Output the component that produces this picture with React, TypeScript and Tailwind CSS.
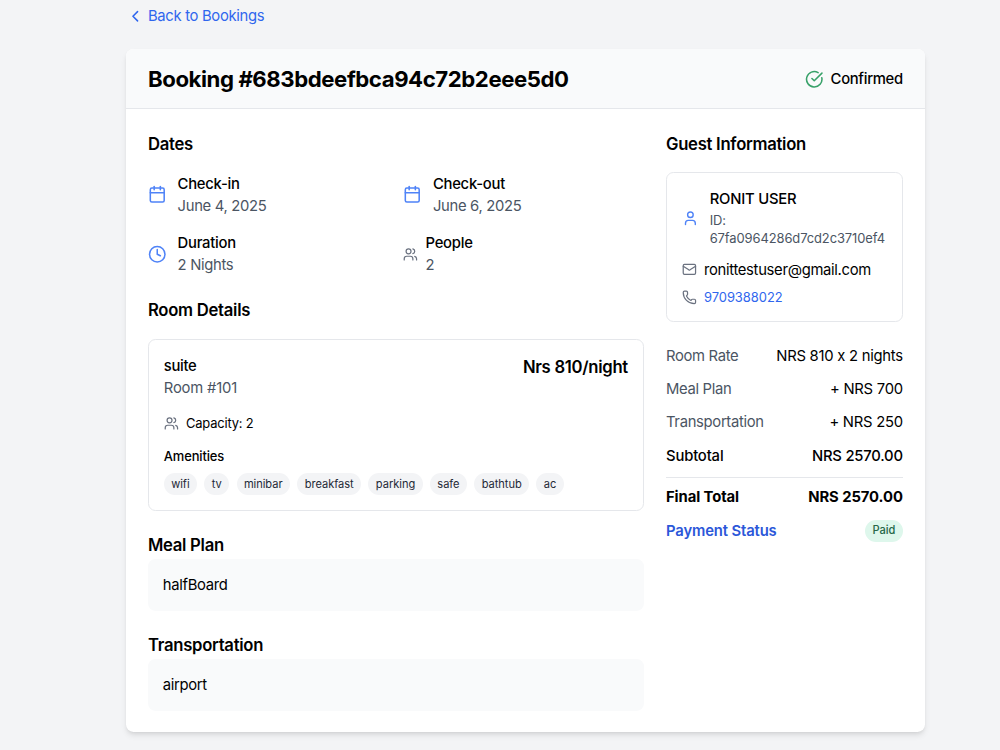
import type { ReactNode } from "react";
import {
  Calendar,
  ChevronLeft,
  CircleCheckBig,
  Clock,
  Mail,
  Phone,
  User,
  Users,
} from "lucide-react";

const amenities = ["wifi", "tv", "minibar", "breakfast", "parking", "safe", "bathtub", "ac"];

const charges = [
  { label: "Room Rate", value: "NRS 810 x 2 nights" },
  { label: "Meal Plan", value: "+ NRS 700" },
  { label: "Transportation", value: "+ NRS 250" },
];

function SectionTitle({ children }: { children: ReactNode }) {
  return <h2 className="text-lg font-semibold tracking-[-0.016em]">{children}</h2>;
}

function Detail({ icon, label, value }: { icon: ReactNode; label: string; value: string }) {
  return (
    <div className="flex items-center">
      {icon}
      <div>
        <p className="font-medium tracking-[-0.016em]">{label}</p>
        <p className="text-[#4b5563]">{value}</p>
      </div>
    </div>
  );
}

export default function App() {
  return (
    <div className="min-h-screen overflow-hidden bg-[#f3f4f6] font-['Inter','Liberation_Sans',sans-serif] text-base tracking-[-0.31px] text-black [font-feature-settings:'calt'_0] [--spacing:3.7px] [--text-xs:11.1px] [--text-sm:12.95px] [--text-base:14.8px] [--text-lg:16.65px] [--text-2xl:22.2px] [--radius-lg:7.4px]">
      <div className="ml-[125.8px] w-[799.2px] pt-[5px]">
        <button type="button" className="flex items-center text-[#2f66ee]">
          <ChevronLeft className="mr-1 h-5 w-5" />
          Back to Bookings
        </button>

        <div className="mt-6 overflow-hidden rounded-lg bg-white shadow-md">
          <div className="flex items-center justify-between border-b border-[#e5e7eb] bg-[#f9fafb] px-6 py-[14.6px]">
            <h1 className="text-2xl font-bold tracking-[-0.0195em]">
              Booking #683bdeefbca94c72b2eee5d0
            </h1>
            <div className="flex items-center">
              <CircleCheckBig className="mr-2 h-5 w-5 text-[#38a169]" />
              <span className="font-medium">Confirmed</span>
            </div>
          </div>

          <div className="grid grid-cols-[495.8px_1fr] gap-6 px-6 pt-[22.7px] pb-[21.3px]">
            <div className="space-y-6">
              <section>
                <SectionTitle>Dates</SectionTitle>
                <div className="mt-4 grid grid-cols-2 gap-4">
                  <Detail
                    icon={<Calendar className="mr-3 h-5 w-5 text-[#4f83f7]" />}
                    label="Check-in"
                    value="June 4, 2025"
                  />
                  <Detail
                    icon={<Calendar className="mr-3 h-5 w-5 text-[#4f83f7]" />}
                    label="Check-out"
                    value="June 6, 2025"
                  />
                  <Detail
                    icon={<Clock className="mr-3 h-5 w-5 text-[#4f83f7]" />}
                    label="Duration"
                    value="2 Nights"
                  />
                  <Detail
                    icon={<Users className="mr-2 h-4 w-4 text-[#6b7280]" />}
                    label="People"
                    value="2"
                  />
                </div>
              </section>

              <section>
                <SectionTitle>Room Details</SectionTitle>
                <div className="mt-4 rounded-lg border border-[#e5e7eb] p-4">
                  <div className="flex items-start justify-between">
                    <div>
                      <p className="font-medium">suite</p>
                      <p className="tracking-[-0.012em] text-[#4b5563]">Room #101</p>
                    </div>
                    <p className="text-lg font-semibold tracking-[-0.016em]">Nrs 810/night</p>
                  </div>
                  <div className="mt-[14.5px] flex items-center text-sm tracking-[-0.014em]">
                    <Users className="mr-2 h-4 w-4 text-[#6b7280]" />
                    Capacity: 2
                  </div>
                  <p className="mt-4 text-sm font-medium tracking-[-0.01em]">Amenities</p>
                  <div className="mt-2 flex flex-wrap gap-2">
                    {amenities.map((name) => (
                      <span
                        key={name}
                        className="rounded-full bg-[#f3f4f6] px-2 py-1 text-xs tracking-[-0.004em] text-[#1f2937]"
                      >
                        {name}
                      </span>
                    ))}
                  </div>
                </div>
              </section>

              <section className="pt-[0.4px]">
                <SectionTitle>Meal Plan</SectionTitle>
                <div className="rounded-lg bg-[#f9fafb] p-4">halfBoard</div>
              </section>

              <section>
                <SectionTitle>Transportation</SectionTitle>
                <div className="rounded-lg bg-[#f9fafb] p-4">airport</div>
              </section>
            </div>

            <div>
              <SectionTitle>Guest Information</SectionTitle>
              <div className="mt-[14.4px] rounded-lg border border-[#e5e7eb] px-4 pt-[15.2px] pb-[14.4px]">
                <div className="flex items-center">
                  <User className="mr-3 h-5 w-[16.8px] shrink-0 text-[#4f83f7]" />
                  <div>
                    <p className="font-medium tracking-[-0.014em]">RONIT USER</p>
                    <p className="text-sm tracking-[-0.007em] text-[#4b5563]">
                      ID:
                      <br />
                      67fa0964286d7cd2c3710ef4
                    </p>
                  </div>
                </div>
                <div className="mt-3 flex items-center">
                  <Mail className="mr-2 h-4 w-4 text-[#6b7280]" />
                  ronittestuser@gmail.com
                </div>
                <div className="mt-2 flex items-center text-sm tracking-[-0.003em]">
                  <Phone className="mr-2 h-4 w-4 text-[#6b7280]" />
                  <a href="tel:9709388022" className="text-[#2f66ee]">
                    9709388022
                  </a>
                </div>
              </div>

              <div className="mt-[22.6px] space-y-3">
                {charges.map((c) => (
                  <div key={c.label} className="flex justify-between">
                    <span className="text-[#4b5563]">{c.label}</span>
                    <span className="tracking-[-0.017em]">{c.value}</span>
                  </div>
                ))}
                <div className="flex justify-between font-medium tracking-[-0.01em]">
                  <span>Subtotal</span>
                  <span className="tracking-[-0.014em]">NRS 2570.00</span>
                </div>
                <div className="-mt-[0.4px] flex justify-between border-t border-[#e5e7eb] pt-[7.9px] font-bold tracking-[-0.005em]">
                  <span>Final Total</span>
                  <span>NRS 2570.00</span>
                </div>
                <div className="flex items-center justify-between">
                  <span className="font-semibold tracking-[-0.008em] text-[#2b57d9]">
                    Payment Status
                  </span>
                  <span className="rounded-full bg-[#def7ec] px-2 py-1 text-xs font-medium tracking-normal text-[#276749]">
                    Paid
                  </span>
                </div>
              </div>
            </div>
          </div>
        </div>
      </div>
    </div>
  );
}
